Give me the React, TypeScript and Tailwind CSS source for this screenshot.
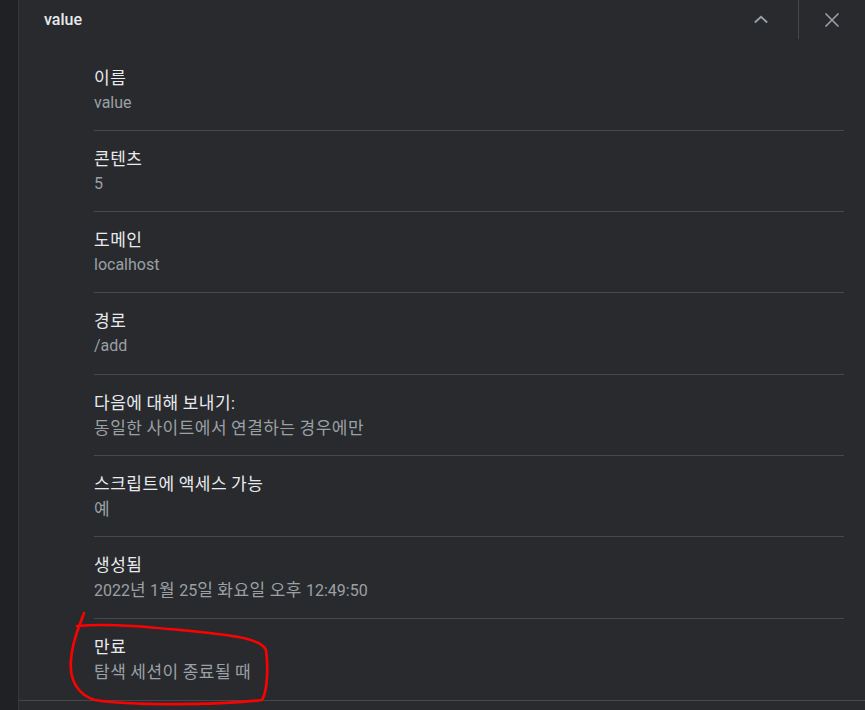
import React from 'react';

const fields: { label: string; value: string }[] = [
  { label: '이름', value: 'value' },
  { label: '콘텐츠', value: '5' },
  { label: '도메인', value: 'localhost' },
  { label: '경로', value: '/add' },
  { label: '다음에 대해 보내기:', value: '동일한 사이트에서 연결하는 경우에만' },
  { label: '스크립트에 액세스 가능', value: '예' },
  { label: '생성됨', value: '2022년 1월 25일 화요일 오후 12:49:50' },
  { label: '만료', value: '탐색 세션이 종료될 때' },
];

// Hangul runs get a slightly larger size so they match the wider system Korean font
const Mixed: React.FC<{ text: string }> = ({ text }) => (
  <>
    {text.split(/([\uAC00-\uD7A3]+)/).map((part, i) =>
      /[\uAC00-\uD7A3]/.test(part) ? (
        <span key={i} className="text-[17px] tracking-[0.5px]">
          {part}
        </span>
      ) : (
        <span key={i}>{part}</span>
      )
    )}
  </>
);

const App: React.FC = () => {
  return (
    <div className="relative flex h-[710px] w-[865px] overflow-hidden bg-[#292a2d] font-['Roboto','Noto_Sans_CJK_KR',sans-serif]">
      {/* left gutter */}
      <div className="w-[19px] shrink-0 border-r border-[#36373a] bg-[#202124]" />

      <div className="flex min-w-0 flex-1 flex-col">
        {/* header */}
        <div className="flex h-[40px] items-center">
          <div className="flex-1 pl-[25px] text-[16px] font-medium text-[#e8eaed]">value</div>
          <button className="flex h-[40px] w-[40px] items-center justify-center text-[#9aa0a6]">
            <svg width="14" height="14" viewBox="0 0 14 14" fill="none">
              <path d="M0.8 9.5 L7 3.8 L13.2 9.5" stroke="currentColor" strokeWidth="1.9" />
            </svg>
          </button>
          <div className="ml-[17px] h-[39px] w-px self-start bg-[#46484c]" />
          <button className="flex h-[40px] w-[66px] items-center justify-center text-[#9aa0a6]">
            <svg width="16" height="16" viewBox="0 0 16 16" fill="none">
              <path d="M1.5 1.5 L14.5 14.5 M14.5 1.5 L1.5 14.5" stroke="currentColor" strokeWidth="1.6" />
            </svg>
          </button>
        </div>

        {/* details */}
        <div className="border-b border-[#46484c] pt-[9.5px]">
          <div className="ml-[75px] mr-[21px]">
            {fields.map((f, i) => (
              <div
                key={f.label}
                className={`flex h-[81.3px] flex-col pt-[18px] ${i < fields.length - 1 ? 'border-b border-[#46484c]' : ''}`}
              >
                <div className="text-[16px] leading-[20px] text-[#e8eaed]">
                  <Mixed text={f.label} />
                </div>
                <div className="mt-[4px] text-[16px] leading-[20px] text-[#9aa0a6]">
                  <Mixed text={f.value} />
                </div>
              </div>
            ))}
          </div>
        </div>
      </div>

      {/* red annotation */}
      <svg className="pointer-events-none absolute left-0 top-0" width="865" height="710" viewBox="0 0 865 710">
        <path
          d="M84 613 C 80 625, 72 640, 71 660 C 69 680, 78 695, 95 700 C 130 706, 220 705, 262 700 C 268 690, 268 665, 266 650 C 262 640, 240 636, 200 632 C 150 627, 110 623, 77 626"
          fill="none"
          stroke="#ff0000"
          strokeWidth="2.6"
          strokeLinecap="round"
          strokeLinejoin="round"
        />
      </svg>
    </div>
  );
};

export default App;
